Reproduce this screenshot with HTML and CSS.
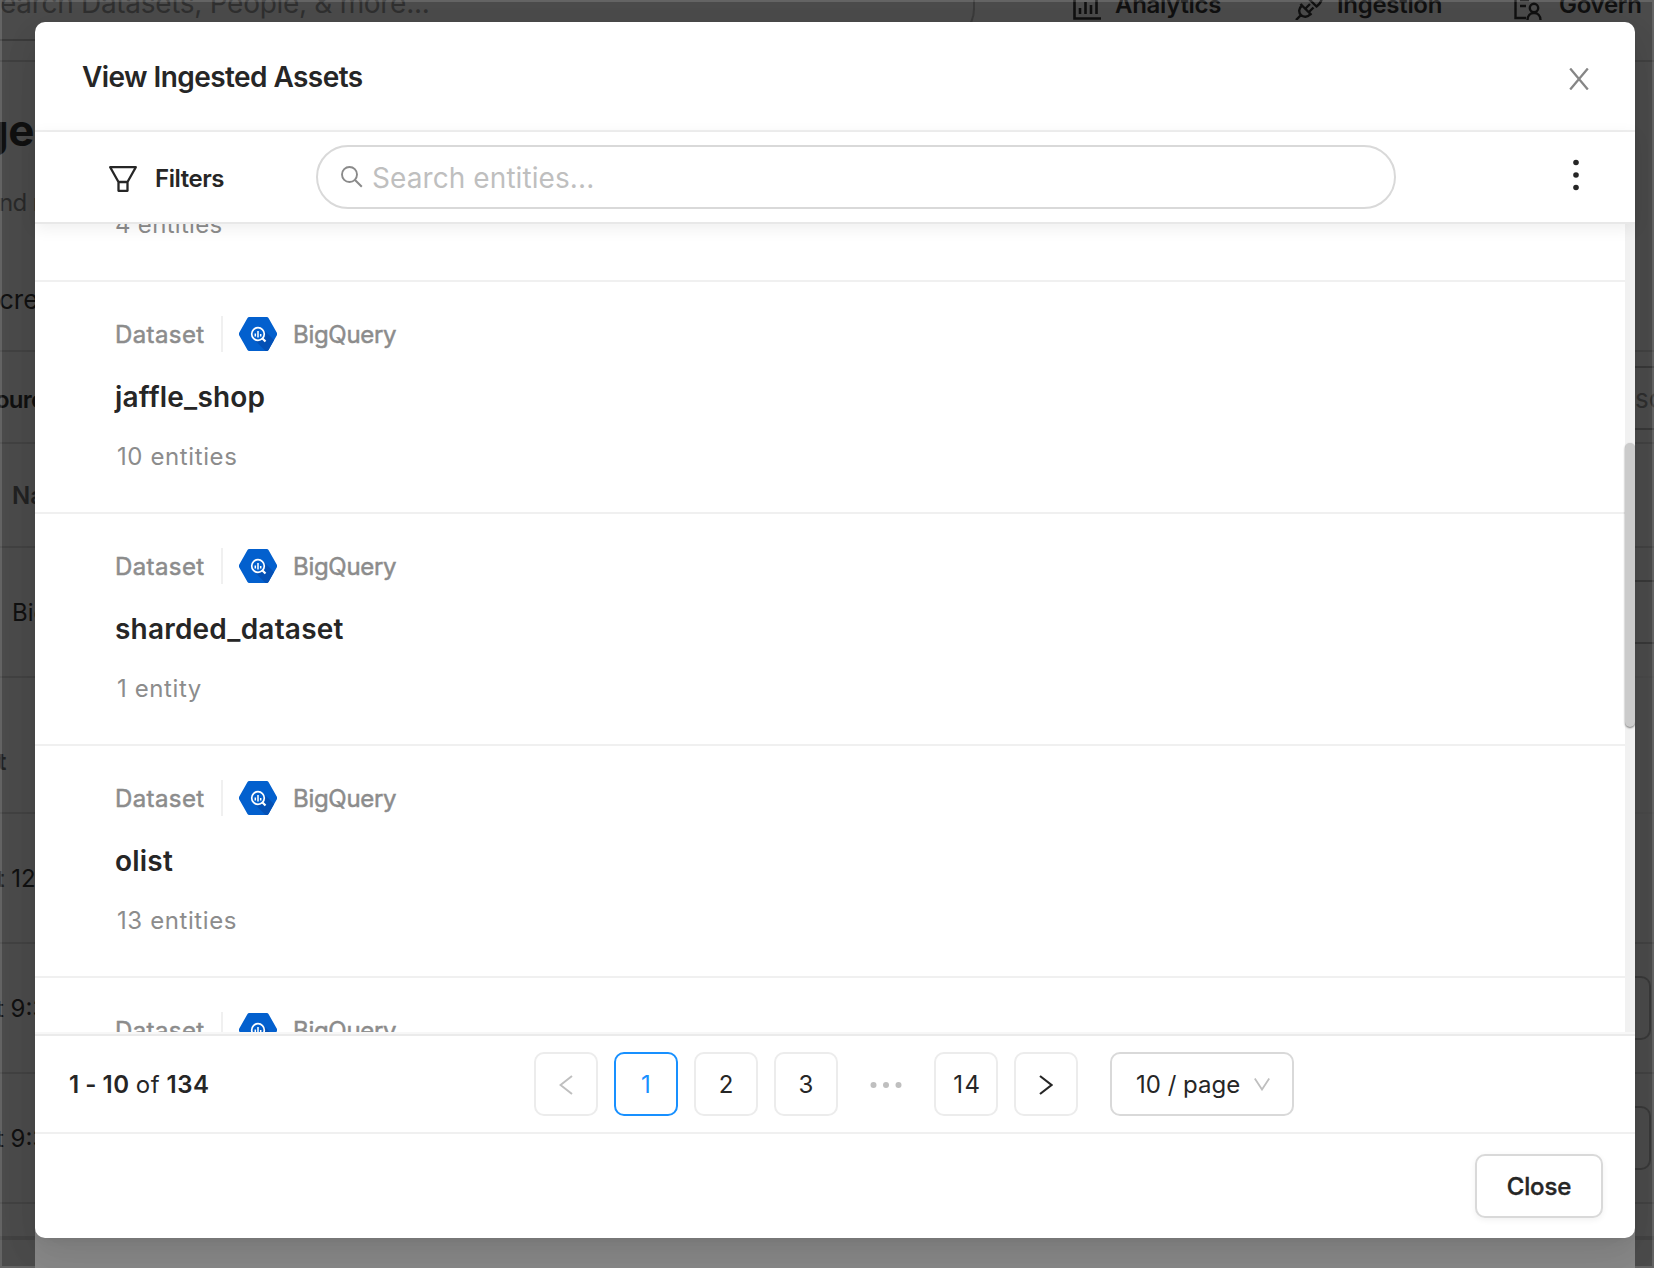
FILE: index.html
```html
<!DOCTYPE html>
<html lang="en">
<head>
<meta charset="utf-8">
<title>View Ingested Assets</title>
<link rel="stylesheet" href="styles.css">
</head>
<body>
<svg class="defs" width="0" height="0" aria-hidden="true">
  <symbol id="bigquery" viewBox="0 0 38 34">
    <path d="M10.2 0h17.6a2 2 0 0 1 1.7 1L38 16a2 2 0 0 1 0 2l-8.500 15a2 2 0 0 1-1.700 1H10.200a2 2 0 0 1-1.700-1L0 18a2 2 0 0 1 0-2L8.500 1a2 2 0 0 1 1.700-1z" fill="#0360ce"/>
    <path d="M24 12l11 11-5.500 10a2 2 0 0 1-1.700 1H26.500L14.500 22z" fill="#0450b5"/>
    <circle cx="19" cy="17" r="6.300" fill="#0360ce" stroke="#fff" stroke-width="1.700"/>
    <path d="M23.500 21.500l3 3" stroke="#fff" stroke-width="2.200"/>
    <path d="M16.300 16.500v3M19 14v6.500M21.700 17v2.500" stroke="#fff" stroke-width="1.500"/>
  </symbol>
</svg>
<div class="page">
  <header class="topbar">
    <div class="global-search">earch Datasets, People, &amp; more...</div>
    <nav class="nav">
      <span class="nav-item"><svg width="28" height="28" viewBox="0 0 28 28"><path d="M1.500 0v26.500H28M7 22v-6M12.500 22V10M18 22v-9M23.500 22V8" fill="none" stroke="currentColor" stroke-width="2.600"/></svg><b>Analytics</b></span>
      <span class="nav-item"><svg width="28" height="28" viewBox="0 0 28 28"><path d="M1 28l5-5M7 13.500l8.500 8.500c-3 3.500-7 3.500-9.500 1s-2.500-6.500 1-9.500zM5.500 12l11 11M11 16l4-4M14.500 19.500l4-4M14 7l7.500 7.500c4-3 6-6 5-11" fill="none" stroke="currentColor" stroke-width="2.400"/></svg><b>Ingestion</b></span>
      <span class="nav-item govern"><svg width="28" height="28" viewBox="0 0 28 28"><path d="M12 26H1.500V2H25v6M6 8h9M6 14h6" fill="none" stroke="currentColor" stroke-width="2.400"/><circle cx="20" cy="16" r="4.200" fill="none" stroke="currentColor" stroke-width="2.400"/><path d="M13.500 28c0-4 2.500-7 6.500-7s6.500 3 6.500 7" fill="none" stroke="currentColor" stroke-width="2.400"/></svg><b>Govern</b></span>
    </nav>
  </header>
  <div class="page-body">
    <div class="strip left">
      <div class="cell h288"><span class="big">ge</span><span class="dim sub">nd r</span><span class="tab">cre</span></div>
      <div class="cell h93 pad37"><b class="src">ourc</b></div>
      <div class="cell h104 pad40 in"><b class="faint">Na</b></div>
      <div class="cell h130 pad53 in">BigQ</div>
      <div class="cell h136 pad72"><b class="faint tee">t</b></div>
      <div class="cell h130 pad52 shift"><b class="faint">t</b> 12</div>
      <div class="cell h130 pad52 shift">t 9:3</div>
      <div class="cell h130 pad52 shift">t 9:3</div>
      <div class="cell h34"></div>
      <div class="cell"></div>
    </div>
    <div class="strip right">
      <div class="cell h288"></div>
      <div class="cell h93"><div class="field">sc</div></div>
      <div class="cell h104"></div>
      <div class="cell h130 plain"><div class="outline open"></div></div>
      <div class="cell h136 plain"></div>
      <div class="cell h130"></div>
      <div class="cell h130"><div class="outline"></div></div>
      <div class="cell h130"><div class="outline"></div></div>
      <div class="cell h34"></div>
      <div class="cell"></div>
    </div>
  </div>
</div>
<div class="frame"></div>
<div class="overlay">
  <section class="modal">
    <header class="modal-head">
      <h1>View Ingested Assets</h1>
      <svg width="20" height="22" viewBox="0 0 20 22"><path d="M1.200.5l17.600 21M18.800.5L1.200 21.500" stroke="#868686" stroke-width="2.300"/></svg>
    </header>
    <div class="filters">
      <div class="filter-btn"><svg width="28" height="26" viewBox="0 0 28 26"><path d="M1.200 1.200h25.600L18.500 16v8.800h-9V16zM9.500 16h9" fill="none" stroke="#262626" stroke-width="2.300" stroke-linejoin="round"/></svg><b>Filters</b></div>
      <div class="search"><svg width="22" height="22" viewBox="0 0 22 22"><circle cx="8.500" cy="8.500" r="7.500" fill="none" stroke="#8a8a8a" stroke-width="1.900"/><path d="M13.800 13.800l7 7" stroke="#8a8a8a" stroke-width="2"/></svg><span>Search entities...</span></div>
      <svg class="kebab" width="6" height="32" viewBox="0 0 6 32" fill="#262626"><circle cx="3" cy="3.500" r="2.800"/><circle cx="3" cy="16" r="2.800"/><circle cx="3" cy="28.500" r="2.800"/></svg>
    </div>
    <div class="list">
      <div class="rows">
        <article class="row first"><p class="count">4 entities</p></article>
        <article class="row">
          <div class="meta"><span class="type">Dataset</span><i></i><svg width="38" height="34"><use href="#bigquery"/></svg><span class="platform">BigQuery</span></div>
          <h2>jaffle_shop</h2><p class="count">10 entities</p>
        </article>
        <article class="row">
          <div class="meta"><span class="type">Dataset</span><i></i><svg width="38" height="34"><use href="#bigquery"/></svg><span class="platform">BigQuery</span></div>
          <h2>sharded_dataset</h2><p class="count">1 entity</p>
        </article>
        <article class="row">
          <div class="meta"><span class="type">Dataset</span><i></i><svg width="38" height="34"><use href="#bigquery"/></svg><span class="platform">BigQuery</span></div>
          <h2>olist</h2><p class="count">13 entities</p>
        </article>
        <article class="row last">
          <div class="meta"><span class="type">Dataset</span><i></i><svg width="38" height="34"><use href="#bigquery"/></svg><span class="platform">BigQuery</span></div>
        </article>
      </div>
      <div class="track"><div class="thumb"></div></div>
    </div>
    <div class="pager">
      <div class="total"><b>1 - 10</b> <span>of</span> <b>134</b></div>
      <div class="pages">
        <span class="pg"><svg width="14" height="20" viewBox="0 0 14 20"><path d="M13 1L1.500 10 13 19" fill="none" stroke="#bfbfbf" stroke-width="2"/></svg></span>
        <span class="pg active">1</span>
        <span class="pg">2</span>
        <span class="pg">3</span>
        <span class="pg dots"><svg width="32" height="6" viewBox="0 0 32 6" fill="#bfbfbf"><circle cx="3.500" cy="3" r="3"/><circle cx="16" cy="3" r="3"/><circle cx="28.500" cy="3" r="3"/></svg></span>
        <span class="pg wide">14</span>
        <span class="pg"><svg width="14" height="20" viewBox="0 0 14 20"><path d="M1 1l11.500 9L1 19" fill="none" stroke="#262626" stroke-width="2.200"/></svg></span>
      </div>
      <div class="size"><span>10 / page</span><svg width="16" height="13" viewBox="0 0 16 13"><path d="M.8.500L8 11.500 15.200.500" fill="none" stroke="#bfbfbf" stroke-width="1.800"/></svg></div>
    </div>
    <footer class="foot"><button>Close</button></footer>
  </section>
</div>
</body>
</html>
```
FILE: styles.css
```css
* { box-sizing: border-box; margin: 0; padding: 0; }
body { width: 1654px; height: 1268px; overflow: hidden; background: #4c4c4c; font: 24px/24px Inter, "Liberation Sans", sans-serif; color: #262626; }
b { font-weight: 600; }
svg { display: block; flex: none; }
.defs { position: absolute; }

.page { height: 1268px; color: #111; overflow: hidden; white-space: nowrap; }
.topbar { height: 62px; border-bottom: 2px solid #414141; display: flex; }
.global-search { flex: none; width: 975px; height: 41px; border: solid #3b3b3b; border-width: 0 2px 2px 0; border-radius: 0 0 32px 0; font-size: 28px; line-height: 6px; color: #303030; letter-spacing: -.3px; }
.nav { display: flex; margin-left: 98px; }
.nav-item { flex: none; width: 222px; display: flex; gap: 14px; line-height: 9px; letter-spacing: -.3px; }
.nav-item svg { margin-top: -8px; }
.govern svg { margin-left: -3px; margin-right: 3px; }

.page-body { display: flex; justify-content: space-between; }
.strip { width: 35px; overflow: hidden; }
.right { width: 19px; }
.cell { display: flow-root; border-bottom: 2px solid #434343; }
.plain { border-bottom-color: #494949; }
.h288 { height: 290px; } .h93 { height: 92px; } .h104 { height: 104px; } .h130 { height: 130px; } .h136 { height: 136px; } .h34 { height: 34px; }
.pad37 { padding-top: 36px; } .pad40 { padding-top: 40px; } .pad53 { padding-top: 53px; } .pad72 { padding-top: 72px; } .pad52 { padding-top: 53px; }
.in { padding-left: 12px; }
.shift { margin-left: -4px; padding-left: 0; }
.big { display: block; padding-top: 46px; margin-left: -19px; font-size: 44px; font-weight: 700; line-height: 44px; height: 129px; letter-spacing: -.5px; }
.dim { color: #2a2a2a; }
.sub { display: block; height: 97px; letter-spacing: -.6px; margin-left: -1px; }
.tab { display: block; font-size: 26px; margin-left: -1px; }
.src { margin-left: -5px; letter-spacing: -.8px; }
.tee { margin-left: -2px; }
.faint { color: #222; }
.field { margin-top: 14px; height: 64px; border: solid #393939; border-width: 2px 0; color: #2f2f2f; line-height: 61px; font-size: 26px; }
.outline { margin-top: 32px; width: 16px; height: 64px; border: 2px solid #393939; border-left: 0; border-radius: 0 10px 10px 0; }
.outline.open { width: 19px; border-right: 0; border-radius: 0; }
.frame { position: absolute; inset: 0; border: 2px solid rgba(255,255,255,.14); }

.overlay { position: absolute; inset: 0; padding: 22px 19px 0 35px; background: linear-gradient(#8a8a8a, #8a8a8a) 35px 1200px / 1600px 68px no-repeat; }
.modal { width: 1600px; height: 1216px; background: #fff; border-radius: 10px; display: flex; flex-direction: column; box-shadow: 0 6px 12px -8px rgba(0,0,0,.12), 0 12px 32px rgba(0,0,0,.08), 0 18px 56px 16px rgba(0,0,0,.05); }
.modal-head { height: 110px; border-bottom: 2px solid #f0f0f0; display: flex; justify-content: space-between; padding: 46px 46px 0 47px; }
h1 { font-size: 28px; line-height: 17px; font-weight: 600; padding-top: 1px; letter-spacing: -.57px; }
.filters { height: 92px; border-bottom: 2px solid #e8e8e8; display: flex; padding: 13px 56px 0 74px; position: relative; box-shadow: 0 4px 16px rgba(0,0,0,.07); }
.filter-btn { display: flex; width: 207px; gap: 18px; padding-top: 21px; }
.filter-btn b { line-height: 25px; letter-spacing: -.45px; }
.search { width: 1080px; height: 64px; border: 2px solid #d9d9d9; border-radius: 32px; display: flex; gap: 9px; padding: 19px 0 0 23px; font-size: 28px; color: #bfbfbf; }
.search span { line-height: 25px; letter-spacing: .08px; }
.kebab { margin: 14px 0 0 auto; }
.list { height: 808px; display: flex; overflow: hidden; }
.rows { flex: 1; }
.row { display: flow-root; height: 232px; border-bottom: 2px solid #f0f0f0; padding: 34px 0 0 80px; }
.row.first { height: 58px; padding-top: 0; }
.row.last { border: 0; height: 58px; overflow: hidden; }
.meta { height: 36px; display: flex; align-items: center; color: #8c8c8c; }
.meta span { -webkit-text-stroke: .5px #8c8c8c; padding-top: 1px; }
.type { width: 106px; letter-spacing: .4px; }
.platform { letter-spacing: -.3px; }
.meta i { width: 2px; height: 36px; background: #f0f0f0; margin-right: 16px; }
.meta svg { margin: 0 16px 0 0; overflow: visible; }
h2 { font-size: 28px; line-height: 32px; font-weight: 600; margin-top: 29px; letter-spacing: .2px; }
.count { color: #8c8c8c; margin: 31px 0 0 2px; line-height: 26px; letter-spacing: .6px; }
.first .count { margin: -12px 0 0 0; letter-spacing: .3px; }
.track { width: 10px; background: #f1f1f1; padding-top: 219px; }
.thumb { height: 284px; border-radius: 5px; background: #cbcbcb; box-shadow: 0 1px 2px rgba(0,0,0,.5); }
.pager { flex: none; height: 100px; margin-top: 2px; border-top: 2px solid #ebebeb; border-bottom: 2px solid #f0f0f0; box-shadow: 0 -2px 0 #f7f7f7; padding: 16px 0 0 34px; display: flex; }
.total { width: 465px; line-height: 66px; letter-spacing: .6px; word-spacing: -1.2px; }
.pages { display: flex; gap: 16px; }
.pg { width: 64px; height: 64px; border: 2px solid #ececec; border-radius: 10px; display: flex; align-items: center; justify-content: center; line-height: 60px; padding-top: 1px; }
.active { border-color: #1890ff; color: #1890ff; }
.wide { letter-spacing: 1.5px; padding-left: 3px; }
.dots { border-color: transparent; }
.size { width: 184px; height: 64px; margin-left: 32px; border: 2px solid #d9d9d9; border-radius: 10px; display: flex; align-items: center; justify-content: space-between; padding: 1px 22px 0 24px; }
.foot { display: flex; justify-content: flex-end; padding: 20px 32px 0; }
button { width: 128px; height: 64px; padding-top: 1px; border: 2px solid #d9d9d9; border-radius: 10px; background: #fff; color: #262626; font: 500 24px/24px Inter, sans-serif; letter-spacing: -.1px; -webkit-text-stroke: .4px #262626; box-shadow: 0 2px 6px rgba(0,0,0,.06); }
```
